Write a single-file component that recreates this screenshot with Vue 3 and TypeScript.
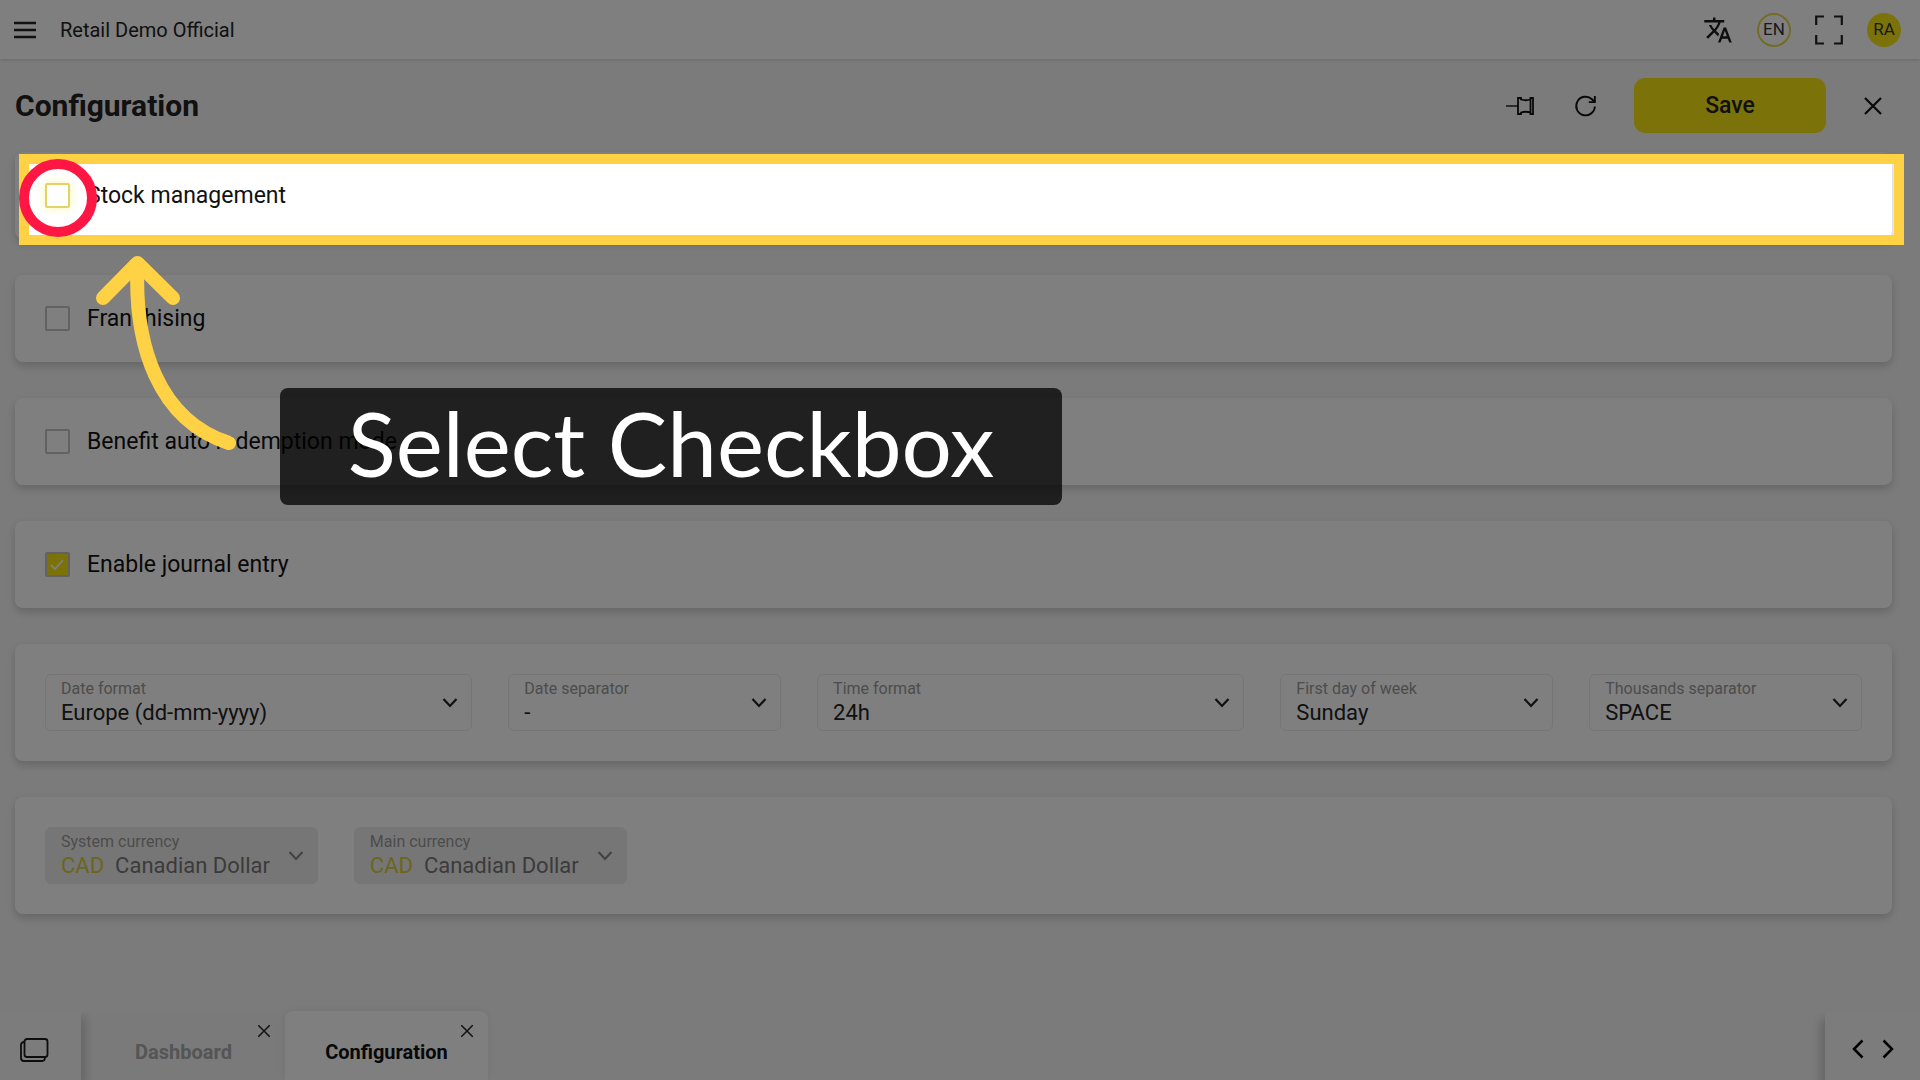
<script setup lang="ts">
import { reactive, ref } from 'vue'

interface Toggle { id: string; label: string; checked: boolean; target?: boolean }
interface Field { id: string; label: string; value: string; wide?: boolean }

const toggles = reactive<Toggle[]>([
  { id: 'stock', label: 'Stock management', checked: false, target: true },
  { id: 'franchising', label: 'Franchising', checked: false },
  { id: 'benefit', label: 'Benefit auto redemption mode', checked: false },
  { id: 'journal', label: 'Enable journal entry', checked: true },
])

const formats: Field[] = [
  { id: 'date-format', label: 'Date format', value: 'Europe (dd-mm-yyyy)', wide: true },
  { id: 'date-separator', label: 'Date separator', value: '-' },
  { id: 'time-format', label: 'Time format', value: '24h', wide: true },
  { id: 'first-day', label: 'First day of week', value: 'Sunday' },
  { id: 'thousands', label: 'Thousands separator', value: 'SPACE' },
]

const currencies: Field[] = [
  { id: 'system-currency', label: 'System currency', value: 'Canadian Dollar' },
  { id: 'main-currency', label: 'Main currency', value: 'Canadian Dollar' },
]

const tabs = ['Dashboard', 'Configuration']
const activeTab = ref('Configuration')
</script>

<template>
  <div class="app">
    <header class="topbar">
      <button class="icon-btn" aria-label="Menu">
        <svg width="22" height="18" viewBox="0 0 22 18" fill="none" stroke="#222" stroke-width="2.400"><path d="M0 2h22M0 9h22M0 16h22" /></svg>
      </button>
      <span class="brand">Retail Demo Official</span>
      <div class="topbar-actions">
        <button class="icon-btn" aria-label="Translate">
          <svg width="30" height="30" viewBox="0 0 24 24" fill="#1a1a1a"><path d="M12.87 15.07l-2.54-2.51.03-.03c1.74-1.94 2.98-4.17 3.71-6.53H17V4h-7V2H8v2H1v1.99h11.17C11.5 7.92 10.44 9.75 9 11.35 8.07 10.32 7.3 9.19 6.69 8h-2c.73 1.63 1.73 3.17 2.98 4.56l-5.09 5.02L4 19l5-5 3.11 3.11.76-2.04zM18.5 10h-2L12 22h2l1.12-3h4.75L21 22h2l-4.5-12zm-2.62 7l1.62-4.33L19.12 17h-3.24z" /></svg>
        </button>
        <button class="badge badge-outline">EN</button>
        <button class="icon-btn" aria-label="Full screen">
          <svg width="28" height="30" viewBox="0 0 28 30" fill="none" stroke="#222" stroke-width="2.200"><path d="M1.200 10V1.500H9M19 1.500H26.800V10M26.800 20V28.500H19M9 28.500H1.200V20" /></svg>
        </button>
        <button class="badge badge-solid">RA</button>
      </div>
    </header>

    <main class="content">
      <div class="page-head">
        <h1>Configuration</h1>
        <div class="page-actions">
          <button class="icon-btn" aria-label="Pin">
            <svg width="28" height="20" viewBox="0 0 28 20" fill="none" stroke="#111" stroke-width="1.800"><path d="M0 10h12" stroke-width="1.400" /><path d="M12 2h3v1.500q4.500 1.500 9.500 0V2H27v16h-2.500v-1.500q-5-1.500-9.500 0V18h-3zM24.500 3v14" /></svg>
          </button>
          <button class="icon-btn" aria-label="Refresh">
            <svg width="24" height="24" viewBox="-2.500 0 25 24" fill="none" stroke="#111" stroke-width="2"><path d="M21.300 12.500A9.700 9.700 0 1 1 18.300 5L21 7.500" /><path d="M21.300 1.500V8H15" /></svg>
          </button>
          <button class="save">Save</button>
          <button class="icon-btn" aria-label="Close">
            <svg width="18" height="18" viewBox="0 0 18 18" fill="none" stroke="#111" stroke-width="2.200"><path d="M1 1l16 16M17 1L1 17" /></svg>
          </button>
        </div>
      </div>

      <section v-for="t in toggles" :key="t.id" class="card toggle-card">
        <label class="toggle" :class="{ target: t.target }">
          <input v-model="t.checked" type="checkbox" />
          <svg v-if="t.checked" class="tick" width="24" height="24" viewBox="0 0 24 24" fill="none" stroke="#fff" stroke-width="1.800"><path d="M6 12l4 4 8-9" /></svg>
          <span>{{ t.label }}</span>
        </label>
        <div v-if="t.target" class="tour">
          <div class="tour-ring"></div>
          <svg class="tour-arrow" width="150" height="210" viewBox="0 0 150 210" fill="none" stroke="#ffd245" stroke-width="14" stroke-linecap="round" stroke-linejoin="round">
            <path d="M17 48L51.500 13L87 48" />
            <path d="M51.500 15C48 95 72 170 143 193" />
          </svg>
          <div class="tour-tip" role="tooltip">Select Checkbox</div>
        </div>
      </section>

      <section class="card fields">
        <div v-for="f in formats" :key="f.id" class="field" :class="{ wide: f.wide }">
          <label :for="f.id">{{ f.label }}</label>
          <div class="value"><select :id="f.id"><option>{{ f.value }}</option></select></div>
          <svg class="chevron" width="16" height="12" viewBox="0 0 16 12" fill="none" stroke="#222" stroke-width="2.200"><path d="M1.500 2L8 9L14.500 2" /></svg>
        </div>
      </section>

      <section class="card fields">
        <div v-for="f in currencies" :key="f.id" class="field disabled">
          <label :for="f.id">{{ f.label }}</label>
          <div class="value"><span class="code">CAD</span><select :id="f.id" disabled><option>{{ f.value }}</option></select></div>
          <svg class="chevron" width="16" height="12" viewBox="0 0 16 12" fill="none" stroke="#888" stroke-width="2.200"><path d="M1.500 2L8 9L14.500 2" /></svg>
        </div>
      </section>
    </main>

    <footer class="tabbar">
      <button class="windows" aria-label="Windows">
        <svg width="29" height="24" viewBox="0 0 29 24" fill="none" stroke="#1a1a1a" stroke-width="1.800"><rect x="4.500" y="1" width="23" height="18" rx="2.500" /><path d="M4.500 4Q1 4 1 7v13q0 3 3 3h18q3 0 3-4" /></svg>
      </button>
      <nav class="tabs">
        <div v-for="tab in tabs" :key="tab" class="tab" :class="{ active: tab === activeTab }">
          <button class="tab-name" @click="activeTab = tab">{{ tab }}</button>
          <button class="tab-close" :aria-label="`Close ${tab}`">
            <svg width="12" height="12" viewBox="0 0 12 12" fill="none" stroke="#222" stroke-width="1.500"><path d="M0 0l12 12M12 0L0 12" /></svg>
          </button>
        </div>
      </nav>
      <div class="pager">
        <button class="icon-btn" aria-label="Previous tab">
          <svg width="12" height="20" viewBox="0 0 12 20" fill="none" stroke="#000" stroke-width="2.500"><path d="M10.500 1.500L2 10l8.500 8.500" /></svg>
        </button>
        <button class="icon-btn" aria-label="Next tab">
          <svg width="12" height="20" viewBox="0 0 12 20" fill="none" stroke="#000" stroke-width="2.500"><path d="M1.500 1.500L10 10l-8.500 8.500" /></svg>
        </button>
      </div>
    </footer>
  </div>
</template>

<style>
body {
  margin: 0;
}
</style>

<style scoped>
.app {
  box-sizing: border-box;
  display: flex;
  flex-direction: column;
  min-height: 100vh;
  overflow: hidden;
  background: #f7f7f7;
  color: #111;
  font-family: Roboto, "Liberation Sans", sans-serif;
}

button {
  padding: 0;
  border: 0;
  background: none;
  color: inherit;
  font: inherit;
  cursor: pointer;
}

svg {
  display: block;
}

.icon-btn {
  display: flex;
}

.topbar {
  display: flex;
  align-items: center;
  height: 59px;
  padding: 0 19px 0 14px;
  background: #fff;
  box-shadow: 0 1px 4px rgba(0, 0, 0, 0.14);
}

.brand {
  margin-left: 24px;
  color: #222;
  font-size: 20px;
}

.topbar-actions {
  display: flex;
  align-items: center;
  gap: 24px;
  margin-left: auto;
}

.badge {
  box-sizing: border-box;
  width: 34px;
  height: 34px;
  padding-bottom: 2px;
  border-radius: 50%;
  color: #333;
  font-size: 17px;
}

.badge-outline {
  border: 2px solid #e6d84e;
}

.badge-solid {
  background: #f8e414;
}

.content {
  display: flex;
  flex-direction: column;
  gap: 36px;
  padding: 0 28px 0 15px;
}

.page-head {
  display: flex;
  align-items: center;
  justify-content: space-between;
  height: 93px;
  margin-bottom: -36px;
}

h1 {
  margin: 0;
  color: #222;
  font-size: 30px;
  font-weight: 700;
}

.page-actions {
  display: flex;
  align-items: center;
  gap: 38px;
  padding-right: 10px;
}

.save {
  width: 192px;
  height: 55px;
  border-radius: 11px;
  background: #f8e414;
  color: #222;
  font-size: 23px;
  font-weight: 500;
}

.card {
  box-sizing: border-box;
  position: relative;
  padding: 30px;
  border-radius: 8px;
  background: #fff;
  box-shadow: 0 4px 10px rgba(0, 0, 0, 0.18);
}

.toggle-card {
  display: flex;
  align-items: center;
  height: 87px;
}

.toggle {
  display: flex;
  align-items: center;
  position: relative;
  gap: 17px;
  font-size: 23px;
}

.toggle input {
  appearance: none;
  box-sizing: border-box;
  width: 25px;
  height: 25px;
  margin: 0;
  border: 2px solid #c4c4c4;
  border-radius: 2px;
}

.toggle input:checked {
  background: #f8e414;
}

.toggle.target input {
  border-color: #e0d468;
  box-shadow: 0 0 10px rgba(248, 228, 20, 0.35);
}

.tick {
  position: absolute;
  left: 0;
}

.tour {
  box-sizing: border-box;
  position: absolute;
  z-index: 10;
  top: 2px;
  right: -12px;
  left: 4px;
  height: 91px;
  border: 10px solid #ffd245;
  box-shadow: 0 0 0 9999px rgba(0, 0, 0, 0.5);
  pointer-events: none;
}

.tour-ring {
  box-sizing: border-box;
  position: absolute;
  top: -5px;
  left: -10px;
  width: 78px;
  height: 78px;
  border: 10px solid #ff1744;
  border-radius: 50%;
}

.tour-arrow {
  position: absolute;
  top: 86px;
  left: 57px;
}

.tour-tip {
  box-sizing: border-box;
  position: absolute;
  top: 224px;
  left: 251px;
  width: 782px;
  height: 117px;
  border-radius: 8px;
  background: rgba(0, 0, 0, 0.75);
  color: #fff;
  font-family: Lato, sans-serif;
  font-size: 89px;
  line-height: 110px;
  text-align: center;
  white-space: nowrap;
}

.fields {
  display: grid;
  grid-template-columns: repeat(12, minmax(0, 1fr));
  column-gap: 36px;
}

.field {
  box-sizing: border-box;
  display: grid;
  grid-column: span 2;
  grid-template-columns: minmax(0, 1fr) 16px;
  grid-template-rows: 24px 26px;
  align-items: center;
  height: 57px;
  padding: 1px 13px 4px 15px;
  border: 1px solid #ebebeb;
  border-radius: 6px;
}

.field.wide {
  grid-column: span 3;
}

.field label {
  color: #999;
  font-size: 16px;
}

.value {
  display: flex;
  grid-row: 2;
  align-items: center;
  gap: 11px;
}

.value select {
  appearance: none;
  flex: 1;
  min-width: 0;
  padding: 0;
  border: 0;
  background: none;
  color: #222;
  font: inherit;
  font-size: 22px;
  line-height: 26px;
}

.chevron {
  grid-row: 1 / 3;
  grid-column: 2;
  margin-top: 4px;
}

.field.disabled {
  border-color: #ededed;
  background: #ededed;
}

.value select:disabled {
  color: #777;
  opacity: 1;
}

.code {
  color: #d8cb3a;
  font-size: 22px;
  line-height: 26px;
}

.tabbar {
  display: flex;
  height: 69px;
  margin-top: auto;
}

.windows {
  display: flex;
  z-index: 1;
  align-items: center;
  width: 81px;
  padding: 8px 0 0 20px;
  background: #f8f8f8;
  box-shadow: 4px 6px 10px rgba(0, 0, 0, 0.2);
  clip-path: inset(0 -20px 0 0);
}

.tabs {
  display: flex;
  flex: 1;
  padding-left: 1px;
}

.tab {
  display: flex;
  position: relative;
  width: 203px;
  border-radius: 8px 8px 0 0;
  background: #f5f5f5;
  color: #aaa;
}

.tab.active {
  background: #fff;
  box-shadow: 0 0 8px rgba(0, 0, 0, 0.08);
  color: #111;
}

.tab-name {
  flex: 1;
  padding-top: 12px;
  font-size: 20px;
  font-weight: 700;
}

.tab-close {
  position: absolute;
  top: 14px;
  right: 15px;
}

.pager {
  display: flex;
  align-items: center;
  gap: 18px;
  padding: 6px 26px 0 27px;
  background: #f9f9f9;
  box-shadow: -4px 8px 10px rgba(0, 0, 0, 0.2);
}
</style>
